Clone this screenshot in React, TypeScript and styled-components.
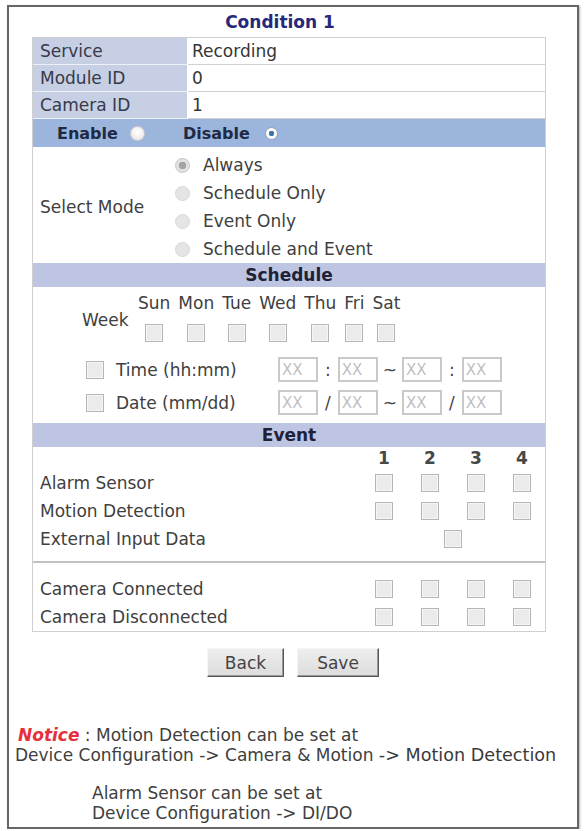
import React from "react";
import styled, { createGlobalStyle } from "styled-components";

const GlobalStyle = createGlobalStyle`
  html, body {
    margin: 0;
    padding: 0;
    background: #fff;
  }
  body {
    font-family: "DejaVu Sans", Verdana, sans-serif;
    font-size: 17px;
    color: #404040;
  }
  * {
    box-sizing: border-box;
  }
`;

const Page = styled.div`
  padding: 5px 0 0 7px;
`;

const Frame = styled.div`
  width: 572px;
  border: 2px solid #666;
  box-shadow: 1px 1px 2px rgba(0, 0, 0, 0.3);
  padding-bottom: 4px;
`;

const Title = styled.div`
  width: 514px;
  margin-left: 23px;
  padding-right: 18px;
  height: 30px;
  line-height: 30px;
  text-align: center;
  font-weight: bold;
  color: #28287a;
`;

const Sheet = styled.div`
  width: 514px;
  margin-left: 23px;
  border: 1px solid #cfcfcf;
`;

const InfoRow = styled.div`
  display: grid;
  grid-template-columns: 154px 1fr;
  column-gap: 1px;
  height: 27px;
`;

const InfoLabel = styled.div`
  background: #c7cfe4;
  border-bottom: 1px solid #eef0f7;
  padding-left: 7px;
  line-height: 26px;
  color: #363a48;
`;

const InfoValue = styled.div`
  border-bottom: 1px solid #d2d2d2;
  padding-left: 4px;
  line-height: 26px;
  color: #363636;
`;

const ToggleBar = styled.div`
  display: flex;
  align-items: center;
  height: 28px;
  background: #9bb5dd;
  font-size: 16px;
  font-weight: bold;
  color: #1f2a44;
`;

const ToggleItem = styled.div<{ $width?: number; $pad?: number }>`
  display: flex;
  align-items: center;
  gap: 12px;
  width: ${(p) => (p.$width ? `${p.$width}px` : "auto")};
  padding-left: ${(p) => p.$pad ?? 0}px;
`;

type RadioTone = "off" | "on" | "mutedOn" | "muted";

const radioLook: Record<RadioTone, string> = {
  off: "border-color: #d2caca; background: radial-gradient(circle at 50% 40%, #ffffff, #e9e2e2);",
  on: "width: 13px; height: 13px; margin-left: 3px; border-color: #9aa6b4; background: radial-gradient(circle, #3f76a4 0 2.5px, #fdfdfd 3px);",
  mutedOn: "border-color: #c4c4c4; background: radial-gradient(circle, #a3a3a3 0 3.5px, #e2e2e2 4px);",
  muted: "border-color: #d8d8d8; background: #e5e5e5;",
};

const Radio = styled.span<{ $tone: RadioTone }>`
  flex: none;
  display: inline-block;
  width: 15px;
  height: 15px;
  border-radius: 50%;
  border: 1px solid;
  ${(p) => radioLook[p.$tone]}
`;

const Check = styled.span`
  flex: none;
  display: inline-block;
  width: 18px;
  height: 18px;
  border: 1px solid #b5b5b5;
  background: #ebebeb;
  box-shadow: inset 0 0 0 1px #f6f6f6;
`;

const ModeSection = styled.div`
  display: grid;
  grid-template-columns: 142px 1fr;
  padding-top: 4px;
`;

const ModeLabel = styled.div`
  align-self: center;
  padding-left: 7px;
`;

const ModeList = styled.div`
  display: flex;
  flex-direction: column;
`;

const ModeOption = styled.div`
  display: flex;
  align-items: center;
  gap: 13px;
  height: 28px;
`;

const SectionBar = styled.div`
  height: 24px;
  line-height: 24px;
  text-align: center;
  font-weight: bold;
  background: #bdc5e3;
  color: #1f2236;
`;

const ScheduleBody = styled.div`
  padding: 6px 0 8px 49px;
`;

const WeekRow = styled.div`
  display: flex;
  align-items: center;
`;

const WeekLabel = styled.div`
  width: 54px;
  padding-top: 4px;
`;

const Days = styled.div`
  display: flex;
  gap: 4px;
`;

const Day = styled.div`
  display: flex;
  flex-direction: column;
  align-items: center;
  gap: 11px;
  padding: 0 2px;
  line-height: 20px;
`;

const RangeRow = styled.div<{ $top: number }>`
  display: flex;
  align-items: center;
  height: 25px;
  margin-top: ${(p) => p.$top}px;
`;

const RangeLabel = styled.div`
  display: flex;
  align-items: center;
  gap: 12px;
  width: 196px;
  padding-left: 4px;
`;

const Field = styled.input`
  width: 40px;
  height: 25px;
  border: 2px solid #c9c9c9;
  padding: 0 2px;
  font-family: "DejaVu Sans", Verdana, sans-serif;
  font-size: 15px;
  color: #bdbdbd;
  background: #fff;
  &::placeholder {
    color: #bfbfbf;
  }
`;

const Sep = styled.span<{ $pad?: number }>`
  padding: 0 ${(p) => p.$pad ?? 7}px;
  color: #444;
`;

const EventGrid = styled.div<{ $rows: string; $top?: number; $bottom?: number }>`
  display: grid;
  grid-template-columns: 1fr repeat(4, 46px);
  grid-template-rows: ${(p) => p.$rows};
  align-items: center;
  padding-top: ${(p) => p.$top ?? 0}px;
  padding-bottom: ${(p) => p.$bottom ?? 0}px;
`;

const EventLabel = styled.div`
  padding-left: 7px;
`;

const ColNum = styled.div`
  justify-self: center;
  font-weight: bold;
  color: #474747;
`;

const CheckCell = styled.div<{ $span?: number }>`
  display: flex;
  justify-content: center;
  grid-column: ${(p) => (p.$span ? `span ${p.$span}` : "auto")};
`;

const Divider = styled.div`
  height: 2px;
  background: #c2c2c2;
`;

const Actions = styled.div`
  display: flex;
  justify-content: center;
  gap: 13px;
  margin-top: 16px;
`;

const Button = styled.button<{ $width: number }>`
  width: ${(p) => p.$width}px;
  height: 29px;
  padding: 0;
  font-family: "DejaVu Sans", Verdana, sans-serif;
  font-size: 17px;
  color: #444;
  background: linear-gradient(#eeeeee, #dcdcdc);
  border: 1px solid;
  border-color: #f5f5f5 #555 #555 #f5f5f5;
  box-shadow: inset -1px -1px 0 #9a9a9a;
`;

const Notes = styled.div`
  margin-top: 48px;
  padding-left: 6px;
  line-height: 20px;
  white-space: nowrap;
`;

const NoteBlock = styled.p<{ $indent: number; $top?: number; $first?: number }>`
  margin: ${(p) => p.$top ?? 0}px 0 0;
  padding-left: ${(p) => p.$indent}px;
  text-indent: ${(p) => p.$first ?? 0}px;
`;

const NoticeTag = styled.span`
  color: #e5303c;
  font-weight: bold;
  font-style: italic;
`;

const MenuPath = styled.span`
  font-size: 17.6px;
  color: #3a3a3a;
`;

const days = ["Sun", "Mon", "Tue", "Wed", "Thu", "Fri", "Sat"];
const modes = ["Always", "Schedule Only", "Event Only", "Schedule and Event"];

const App: React.FC = () => {
  return (
    <Page>
      <GlobalStyle />
      <Frame>
        <Title>Condition 1</Title>
        <Sheet>
          <InfoRow>
            <InfoLabel>Service</InfoLabel>
            <InfoValue>Recording</InfoValue>
          </InfoRow>
          <InfoRow>
            <InfoLabel>Module ID</InfoLabel>
            <InfoValue>0</InfoValue>
          </InfoRow>
          <InfoRow>
            <InfoLabel>Camera ID</InfoLabel>
            <InfoValue>1</InfoValue>
          </InfoRow>

          <ToggleBar>
            <ToggleItem $width={150} $pad={24}>
              Enable <Radio $tone="off" />
            </ToggleItem>
            <ToggleItem>
              Disable <Radio $tone="on" />
            </ToggleItem>
          </ToggleBar>

          <ModeSection>
            <ModeLabel>Select Mode</ModeLabel>
            <ModeList>
              {modes.map((m, i) => (
                <ModeOption key={m}>
                  <Radio $tone={i === 0 ? "mutedOn" : "muted"} />
                  {m}
                </ModeOption>
              ))}
            </ModeList>
          </ModeSection>

          <SectionBar>Schedule</SectionBar>
          <ScheduleBody>
            <WeekRow>
              <WeekLabel>Week</WeekLabel>
              <Days>
                {days.map((d) => (
                  <Day key={d}>
                    {d}
                    <Check />
                  </Day>
                ))}
              </Days>
            </WeekRow>
            <RangeRow $top={15}>
              <RangeLabel>
                <Check />
                Time (hh:mm)
              </RangeLabel>
              <Field placeholder="XX" readOnly />
              <Sep>:</Sep>
              <Field placeholder="XX" readOnly />
              <Sep $pad={5}>~</Sep>
              <Field placeholder="XX" readOnly />
              <Sep>:</Sep>
              <Field placeholder="XX" readOnly />
            </RangeRow>
            <RangeRow $top={8}>
              <RangeLabel>
                <Check />
                Date (mm/dd)
              </RangeLabel>
              <Field placeholder="XX" readOnly />
              <Sep>/</Sep>
              <Field placeholder="XX" readOnly />
              <Sep $pad={5}>~</Sep>
              <Field placeholder="XX" readOnly />
              <Sep>/</Sep>
              <Field placeholder="XX" readOnly />
            </RangeRow>
          </ScheduleBody>

          <SectionBar>Event</SectionBar>
          <EventGrid $rows="22px repeat(3, 28px)" $bottom={8}>
            <div />
            {[1, 2, 3, 4].map((n) => (
              <ColNum key={n}>{n}</ColNum>
            ))}
            {["Alarm Sensor", "Motion Detection"].map((label) => (
              <React.Fragment key={label}>
                <EventLabel>{label}</EventLabel>
                {[1, 2, 3, 4].map((n) => (
                  <CheckCell key={n}>
                    <Check />
                  </CheckCell>
                ))}
              </React.Fragment>
            ))}
            <EventLabel>External Input Data</EventLabel>
            <CheckCell $span={4}>
              <Check />
            </CheckCell>
          </EventGrid>
          <Divider />
          <EventGrid $rows="repeat(2, 28px)" $top={12}>
            {["Camera Connected", "Camera Disconnected"].map((label) => (
              <React.Fragment key={label}>
                <EventLabel>{label}</EventLabel>
                {[1, 2, 3, 4].map((n) => (
                  <CheckCell key={n}>
                    <Check />
                  </CheckCell>
                ))}
              </React.Fragment>
            ))}
          </EventGrid>
        </Sheet>

        <Actions>
          <Button $width={77}>Back</Button>
          <Button $width={82}>Save</Button>
        </Actions>

        <Notes>
          <NoteBlock $indent={0} $first={3}>
            <NoticeTag>Notice</NoticeTag> : Motion Detection can be set at
            <br />
            Device Configuration -&gt; Camera &amp; Motion{" "}
            <MenuPath>-&gt; Motion Detection</MenuPath>
          </NoteBlock>
          <NoteBlock $indent={77} $top={18}>
            Alarm Sensor can be set at
            <br />
            Device Configuration -&gt; DI/DO
          </NoteBlock>
        </Notes>
      </Frame>
    </Page>
  );
};

export default App;
